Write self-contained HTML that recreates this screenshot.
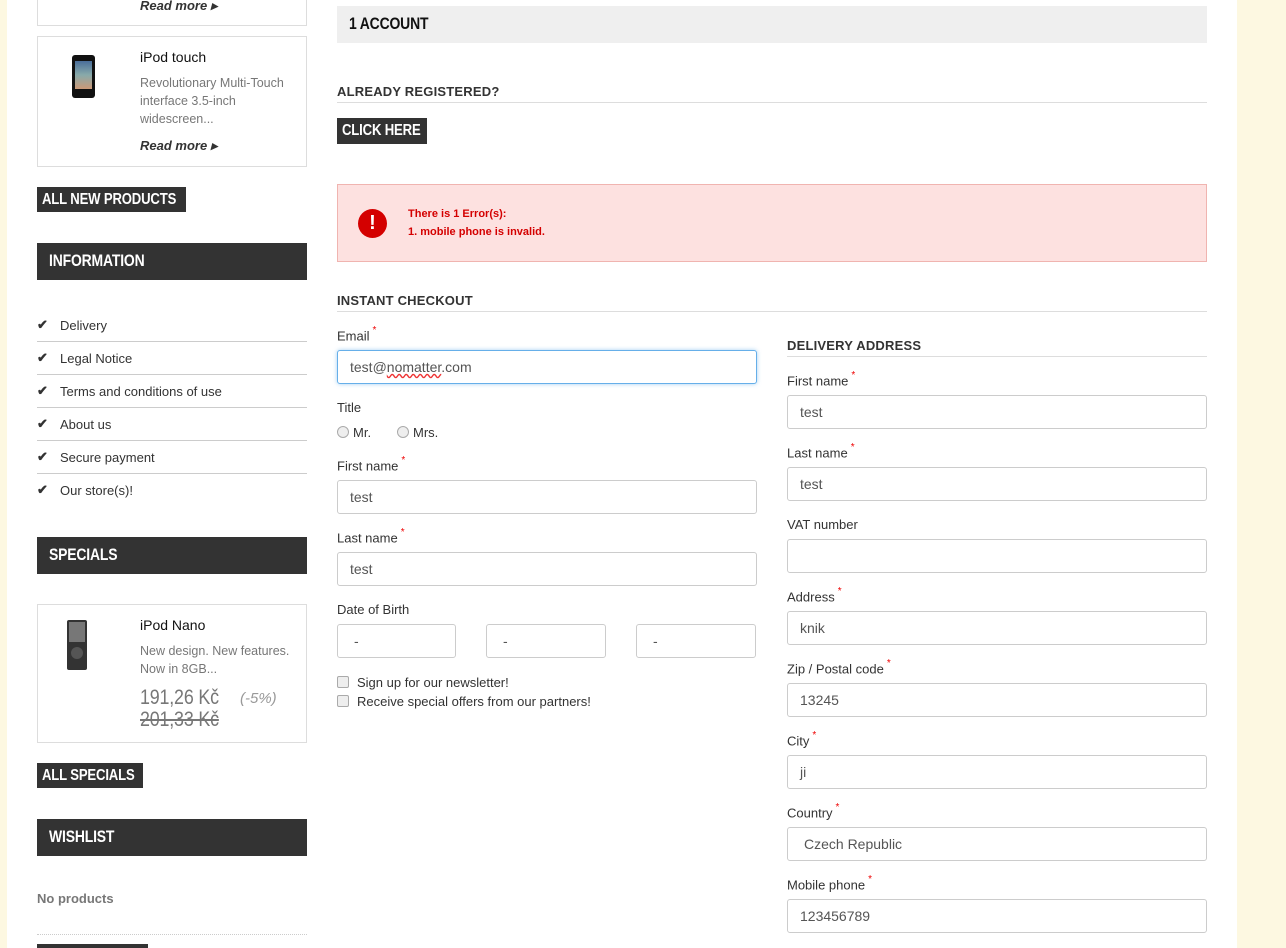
<!DOCTYPE html>
<html><head><meta charset="utf-8"><style>
*{box-sizing:border-box;margin:0;padding:0}
html,body{width:1286px;height:948px;overflow:hidden}
body{background:#fff;position:relative;font-family:"Liberation Sans",Arial,sans-serif;font-size:13px;color:#333}
.a{position:absolute}
.c{display:inline-block;transform:scaleX(.82);transform-origin:left center;white-space:nowrap;letter-spacing:-0.2px}
.box{position:absolute;border:1px solid #ddd;background:#fff}
.btn{position:absolute;background:#333;color:#fff;font-weight:bold;font-size:16px;padding-left:5px;line-height:25px;height:25px;white-space:nowrap;overflow:hidden}
.hdr{position:absolute;left:37px;width:270px;height:37px;background:#333;color:#fff;font-weight:bold;font-size:17px;padding-left:12px;line-height:35px;white-space:nowrap}
.li{position:absolute;left:37px;width:270px;height:33px;font-size:13px;color:#333}
.li span{position:absolute;left:23px;top:9px}
.li i{position:absolute;left:0;top:8px;font-style:normal;font-size:13px;font-weight:bold}
.li.b{border-bottom:1px solid #ccc}
.lbl{position:absolute;font-size:13px;color:#333}
.lbl sup{color:#e00;font-size:10px;position:relative;top:-2px;margin-left:3px}
.inp{position:absolute;height:34px;border:1px solid #ccc;border-radius:3px;font-size:14px;color:#555;padding-left:12px;line-height:32px;background:#fff}
.sec{position:absolute;font-size:13px;font-weight:bold;color:#333;letter-spacing:.2px;border-bottom:1px solid #ddd}
</style></head><body>
<div class="a" style="left:0;top:0;width:7px;height:948px;background:#fdf8e1"></div>
<div class="a" style="left:1237px;top:0;width:49px;height:948px;background:#fdf8e1"></div>

<div class="box" style="left:37px;top:-10px;width:270px;height:36px"></div>
<div class="a" style="left:140px;top:-2px;font-size:13px;font-weight:bold;font-style:italic;color:#333">Read more ▸</div>

<div class="box" style="left:37px;top:36px;width:270px;height:131px"></div>
<div class="a" style="left:72px;top:55px;width:23px;height:43px;background:#111;border-radius:3px"></div>
<div class="a" style="left:75px;top:61px;width:17px;height:28px;background:linear-gradient(#4a6e9a,#8aa,#c97)"></div>
<div class="a" style="left:140px;top:49px;font-size:14px;color:#111">iPod touch</div>
<div class="a" style="left:140px;top:74px;font-size:12.5px;color:#777;line-height:18px">Revolutionary Multi-Touch<br>interface 3.5-inch<br>widescreen...</div>
<div class="a" style="left:140px;top:138px;font-size:13px;font-weight:bold;font-style:italic;color:#333">Read more ▸</div>

<div class="btn" style="left:37px;top:187px;width:149px"><span class="c">ALL NEW PRODUCTS</span></div>
<div class="hdr" style="top:243px"><span class="c">INFORMATION</span></div>
<div class="li b" style="top:309px"><i>✔</i><span>Delivery</span></div>
<div class="li b" style="top:342px"><i>✔</i><span>Legal Notice</span></div>
<div class="li b" style="top:375px"><i>✔</i><span>Terms and conditions of use</span></div>
<div class="li b" style="top:408px"><i>✔</i><span>About us</span></div>
<div class="li b" style="top:441px"><i>✔</i><span>Secure payment</span></div>
<div class="li" style="top:474px"><i>✔</i><span>Our store(s)!</span></div>

<div class="hdr" style="top:537px"><span class="c">SPECIALS</span></div>
<div class="box" style="left:37px;top:604px;width:270px;height:139px"></div>
<div class="a" style="left:67px;top:620px;width:20px;height:50px;background:#333;border-radius:2px"></div>
<div class="a" style="left:69px;top:622px;width:16px;height:20px;background:#777"></div>
<div class="a" style="left:71px;top:647px;width:12px;height:12px;border-radius:50%;background:#555"></div>
<div class="a" style="left:140px;top:617px;font-size:14px;color:#111">iPod Nano</div>
<div class="a" style="left:140px;top:642px;font-size:12.5px;color:#777;line-height:18px">New design. New features.<br>Now in 8GB...</div>
<div class="a" style="left:140px;top:686px;font-size:21px;color:#777"><span class="c" style="transform:scaleX(.85)">191,26 Kč</span></div>
<div class="a" style="left:240px;top:690px;font-size:15px;color:#999;font-style:italic">(-5%)</div>
<div class="a" style="left:140px;top:708px;font-size:21px;color:#777;text-decoration:line-through"><span class="c" style="transform:scaleX(.85);text-decoration:line-through">201,33 Kč</span></div>

<div class="btn" style="left:37px;top:763px;width:106px"><span class="c">ALL SPECIALS</span></div>
<div class="hdr" style="top:819px"><span class="c">WISHLIST</span></div>
<div class="a" style="left:37px;top:891px;font-size:13px;font-weight:bold;color:#777">No products</div>
<div class="a" style="left:37px;top:934px;width:270px;border-top:1px dotted #ccc"></div>
<div class="a" style="left:37px;top:944px;width:111px;height:4px;background:#333"></div>

<div class="a" style="left:337px;top:6px;width:870px;height:37px;background:#efefef;font-weight:bold;font-size:17px;color:#111;padding-left:12px;line-height:35px"><span class="c">1 ACCOUNT</span></div>
<div class="sec" style="left:337px;top:84px;width:870px;height:19px">ALREADY REGISTERED?</div>
<div class="btn" style="left:337px;top:118px;width:90px;height:26px"><span class="c">CLICK HERE</span></div>

<div class="a" style="left:337px;top:184px;width:870px;height:78px;background:#fde1e0;border:1px solid #f0b4b0"></div>
<div class="a" style="left:358px;top:209px;width:29px;height:29px;border-radius:50%;background:#d40000;color:#fff;font-weight:bold;font-size:20px;text-align:center;line-height:29px">!</div>
<div class="a" style="left:408px;top:205px;font-size:11px;font-weight:bold;color:#d40000;line-height:18px">There is 1 Error(s):<br>1. mobile phone is invalid.</div>

<div class="sec" style="left:337px;top:293px;width:870px;height:19px">INSTANT CHECKOUT</div>

<div class="lbl" style="left:337px;top:327px">Email<sup>*</sup></div>
<div class="inp" style="left:337px;top:350px;width:420px;border-color:#66afe9;box-shadow:0 0 4px rgba(102,175,233,.6)">test@<span style="text-decoration:underline wavy #e33">nomatter</span>.com</div>
<div class="lbl" style="left:337px;top:400px">Title</div>
<div class="a" style="left:337px;top:426px;width:12px;height:12px;border:1px solid #aaa;border-radius:50%;background:#eee"></div>
<div class="lbl" style="left:353px;top:425px">Mr.</div>
<div class="a" style="left:397px;top:426px;width:12px;height:12px;border:1px solid #aaa;border-radius:50%;background:#eee"></div>
<div class="lbl" style="left:413px;top:425px">Mrs.</div>
<div class="lbl" style="left:337px;top:457px">First name<sup>*</sup></div>
<div class="inp" style="left:337px;top:480px;width:420px">test</div>
<div class="lbl" style="left:337px;top:529px">Last name<sup>*</sup></div>
<div class="inp" style="left:337px;top:552px;width:420px">test</div>
<div class="lbl" style="left:337px;top:602px">Date of Birth</div>
<div class="inp" style="left:337px;top:624px;width:119px;padding-left:16px">-</div>
<div class="inp" style="left:486px;top:624px;width:120px;padding-left:16px">-</div>
<div class="inp" style="left:636px;top:624px;width:120px;padding-left:16px">-</div>
<div class="a" style="left:337px;top:676px;width:12px;height:12px;border:1px solid #aaa;border-radius:2px;background:#eee"></div>
<div class="lbl" style="left:357px;top:675px">Sign up for our newsletter!</div>
<div class="a" style="left:337px;top:695px;width:12px;height:12px;border:1px solid #aaa;border-radius:2px;background:#eee"></div>
<div class="lbl" style="left:357px;top:694px">Receive special offers from our partners!</div>

<div class="sec" style="left:787px;top:338px;width:420px;height:19px">DELIVERY ADDRESS</div>
<div class="lbl" style="left:787px;top:372px">First name<sup>*</sup></div>
<div class="inp" style="left:787px;top:395px;width:420px">test</div>
<div class="lbl" style="left:787px;top:444px">Last name<sup>*</sup></div>
<div class="inp" style="left:787px;top:467px;width:420px">test</div>
<div class="lbl" style="left:787px;top:517px">VAT number</div>
<div class="inp" style="left:787px;top:539px;width:420px"></div>
<div class="lbl" style="left:787px;top:588px">Address<sup>*</sup></div>
<div class="inp" style="left:787px;top:611px;width:420px">knik</div>
<div class="lbl" style="left:787px;top:660px">Zip / Postal code<sup>*</sup></div>
<div class="inp" style="left:787px;top:683px;width:420px">13245</div>
<div class="lbl" style="left:787px;top:732px">City<sup>*</sup></div>
<div class="inp" style="left:787px;top:755px;width:420px">ji</div>
<div class="lbl" style="left:787px;top:804px">Country<sup>*</sup></div>
<div class="inp" style="left:787px;top:827px;width:420px;padding-left:16px">Czech Republic</div>
<div class="lbl" style="left:787px;top:876px">Mobile phone<sup>*</sup></div>
<div class="inp" style="left:787px;top:899px;width:420px">123456789</div>
</body></html>
